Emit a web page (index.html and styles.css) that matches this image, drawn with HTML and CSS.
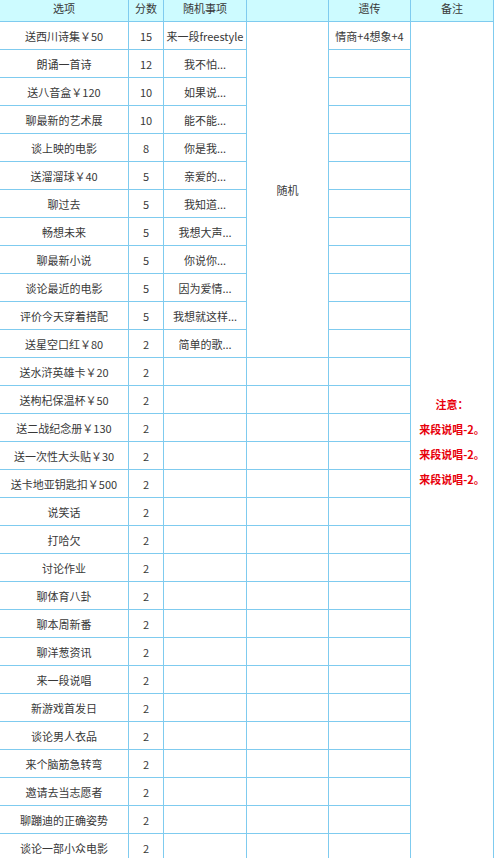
FILE: index.html
```html
<!DOCTYPE html>
<html lang="zh">
<head>
<meta charset="utf-8">
<title>选项</title>
<link rel="stylesheet" href="styles.css">
</head>
<body>
<table class="grid">
  <colgroup>
    <col class="c1"><col class="c2"><col class="c3"><col class="c4"><col class="c5"><col class="c6">
  </colgroup>
  <thead>
    <tr class="head"><th>选项</th><th>分数</th><th>随机事项</th><th></th><th>遗传</th><th>备注</th></tr>
  </thead>
  <tbody>
    <tr><td>送西川诗集￥50</td><td>15</td><td>来一段freestyle</td><td rowspan="12" class="span">随机</td><td>情商+4想象+4</td>
      <td rowspan="30" class="note"><div class="note-in"><p>注意：</p><p>来段说唱-2。</p><p>来段说唱-2。</p><p>来段说唱-2。</p></div></td></tr>
    <tr><td>朗诵一首诗</td><td>12</td><td>我不怕...</td><td></td></tr>
    <tr><td>送八音盒￥120</td><td>10</td><td>如果说...</td><td></td></tr>
    <tr><td>聊最新的艺术展</td><td>10</td><td>能不能...</td><td></td></tr>
    <tr><td>谈上映的电影</td><td>8</td><td>你是我...</td><td></td></tr>
    <tr><td>送溜溜球￥40</td><td>5</td><td>亲爱的...</td><td></td></tr>
    <tr><td>聊过去</td><td>5</td><td>我知道...</td><td></td></tr>
    <tr><td>畅想未来</td><td>5</td><td>我想大声...</td><td></td></tr>
    <tr><td>聊最新小说</td><td>5</td><td>你说你...</td><td></td></tr>
    <tr><td>谈论最近的电影</td><td>5</td><td>因为爱情...</td><td></td></tr>
    <tr><td>评价今天穿着搭配</td><td>5</td><td>我想就这样...</td><td></td></tr>
    <tr><td>送星空口红￥80</td><td>2</td><td>简单的歌...</td><td></td></tr>
    <tr><td>送水浒英雄卡￥20</td><td>2</td><td></td><td></td><td></td></tr>
    <tr><td>送枸杞保温杯￥50</td><td>2</td><td></td><td></td><td></td></tr>
    <tr><td>送二战纪念册￥130</td><td>2</td><td></td><td></td><td></td></tr>
    <tr><td>送一次性大头贴￥30</td><td>2</td><td></td><td></td><td></td></tr>
    <tr><td>送卡地亚钥匙扣￥500</td><td>2</td><td></td><td></td><td></td></tr>
    <tr><td>说笑话</td><td>2</td><td></td><td></td><td></td></tr>
    <tr><td>打哈欠</td><td>2</td><td></td><td></td><td></td></tr>
    <tr><td>讨论作业</td><td>2</td><td></td><td></td><td></td></tr>
    <tr><td>聊体育八卦</td><td>2</td><td></td><td></td><td></td></tr>
    <tr><td>聊本周新番</td><td>2</td><td></td><td></td><td></td></tr>
    <tr><td>聊洋葱资讯</td><td>2</td><td></td><td></td><td></td></tr>
    <tr><td>来一段说唱</td><td>2</td><td></td><td></td><td></td></tr>
    <tr><td>新游戏首发日</td><td>2</td><td></td><td></td><td></td></tr>
    <tr><td>谈论男人衣品</td><td>2</td><td></td><td></td><td></td></tr>
    <tr><td>来个脑筋急转弯</td><td>2</td><td></td><td></td><td></td></tr>
    <tr><td>邀请去当志愿者</td><td>2</td><td></td><td></td><td></td></tr>
    <tr><td>聊蹦迪的正确姿势</td><td>2</td><td></td><td></td><td></td></tr>
    <tr><td>谈论一部小众电影</td><td>2</td><td></td><td></td><td></td></tr>
  </tbody>
</table>
</body>
</html>
```

FILE: styles.css
```css
html, body {
  margin: 0;
  padding: 0;
  background: #ffffff;
  overflow: hidden;
}

.grid {
  margin-top: -7px;
  margin-left: -1px;
  border-collapse: separate;
  border-spacing: 0;
  table-layout: fixed;
  width: 495px;
  border-left: 1px solid #7fcbef;
  border-top: 1px solid #7fcbef;
  font-family: "Noto Sans CJK SC", "Noto Sans", sans-serif;
  font-size: 11px;
  color: #383838;
}

.c1 { width: 129px; }
.c2 { width: 35px; }
.c3 { width: 83px; }
.c4 { width: 82px; }
.c5 { width: 82px; }
.c6 { width: 83px; }

.grid th,
.grid td {
  box-sizing: border-box;
  height: 28px;
  padding: 0;
  border-right: 1px solid #7fcbef;
  border-bottom: 1px solid #7fcbef;
  text-align: center;
  vertical-align: middle;
  white-space: nowrap;
  font-weight: normal;
  line-height: 16px;
}

.head th {
  background: #cdfbff;
}

.grid td.note {
  vertical-align: middle;
  border-bottom: none;
}

.note-in p {
  margin: 0;
  line-height: 25px;
  color: #e8000b;
  font-weight: bold;
}
```
